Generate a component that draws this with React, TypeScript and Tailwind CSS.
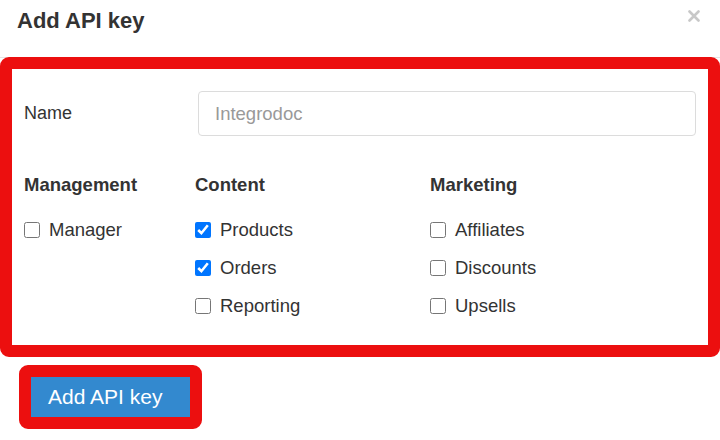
import React from "react";

const groups = [
  { title: "Management", width: "w-[171px]", items: [{ label: "Manager", checked: false }] },
  {
    title: "Content",
    width: "w-[235px]",
    items: [
      { label: "Products", checked: true },
      { label: "Orders", checked: true },
      { label: "Reporting", checked: false },
    ],
  },
  {
    title: "Marketing",
    width: "flex-1",
    items: [
      { label: "Affiliates", checked: false },
      { label: "Discounts", checked: false },
      { label: "Upsells", checked: false },
    ],
  },
];

function PermissionGroup({ title, width, items }: { title: string; width: string; items: { label: string; checked: boolean }[] }) {
  return (
    <div className={`${width} flex flex-col`}>
      <div className="h-[22px] leading-[22px] text-[18.5px] font-bold text-[#333]">{title}</div>
      <div className="mt-[23px] flex flex-col gap-[16px]">
        {items.map((item) => (
          <label key={item.label} className="flex items-center h-[22px] gap-[9px] text-[18.5px] text-[#333] leading-[22px]">
            <input
              type="checkbox"
              defaultChecked={item.checked}
              className="w-[16px] h-[16px] m-0 accent-[#0075ff]"
            />
            {item.label}
          </label>
        ))}
      </div>
    </div>
  );
}

export default function App() {
  return (
    <div className="w-[720px] h-[440px] bg-white overflow-hidden font-['Liberation_Sans',Arial,sans-serif]">
      <div className="h-[58px] flex justify-between items-start border-b border-[#e5e5e5] pl-[17px] pr-[20px]">
        <h4 className="pt-[8px] text-[22px] leading-[26px] font-bold text-[#333]">Add API key</h4>
        <svg className="mt-[10px]" width="12" height="12" viewBox="0 0 12 12">
          <path d="M1.5 1.5 L10.5 10.5 M10.5 1.5 L1.5 10.5" stroke="#c8c8c8" strokeWidth="2.6" strokeLinecap="round" />
        </svg>
      </div>

      <div className="border-[12px] border-[#ec0f0f] rounded-[9px] h-[300px] -mt-[1px] pt-[22px] px-[12px]">
        <div className="flex items-center">
          <div className="w-[174px] text-[18px] text-[#333]">Name</div>
          <input
            type="text"
            placeholder="Integrodoc"
            className="flex-1 h-[45px] border border-[#dcdcdc] rounded-[4px] px-[16px] text-[18.5px] text-[#333] placeholder:text-[#999] outline-none"
          />
        </div>
        <div className="flex mt-[38px]">
          {groups.map((g) => (
            <PermissionGroup key={g.title} {...g} />
          ))}
        </div>
      </div>

      <div className="ml-[19px] mt-[8px] inline-flex border-[12px] border-[#ec0f0f] rounded-[9px]">
        <button className="w-[159px] h-[40px] bg-[#3389cf] text-white text-[21px] text-left pl-[17px]">
          Add API key
        </button>
      </div>
    </div>
  );
}
